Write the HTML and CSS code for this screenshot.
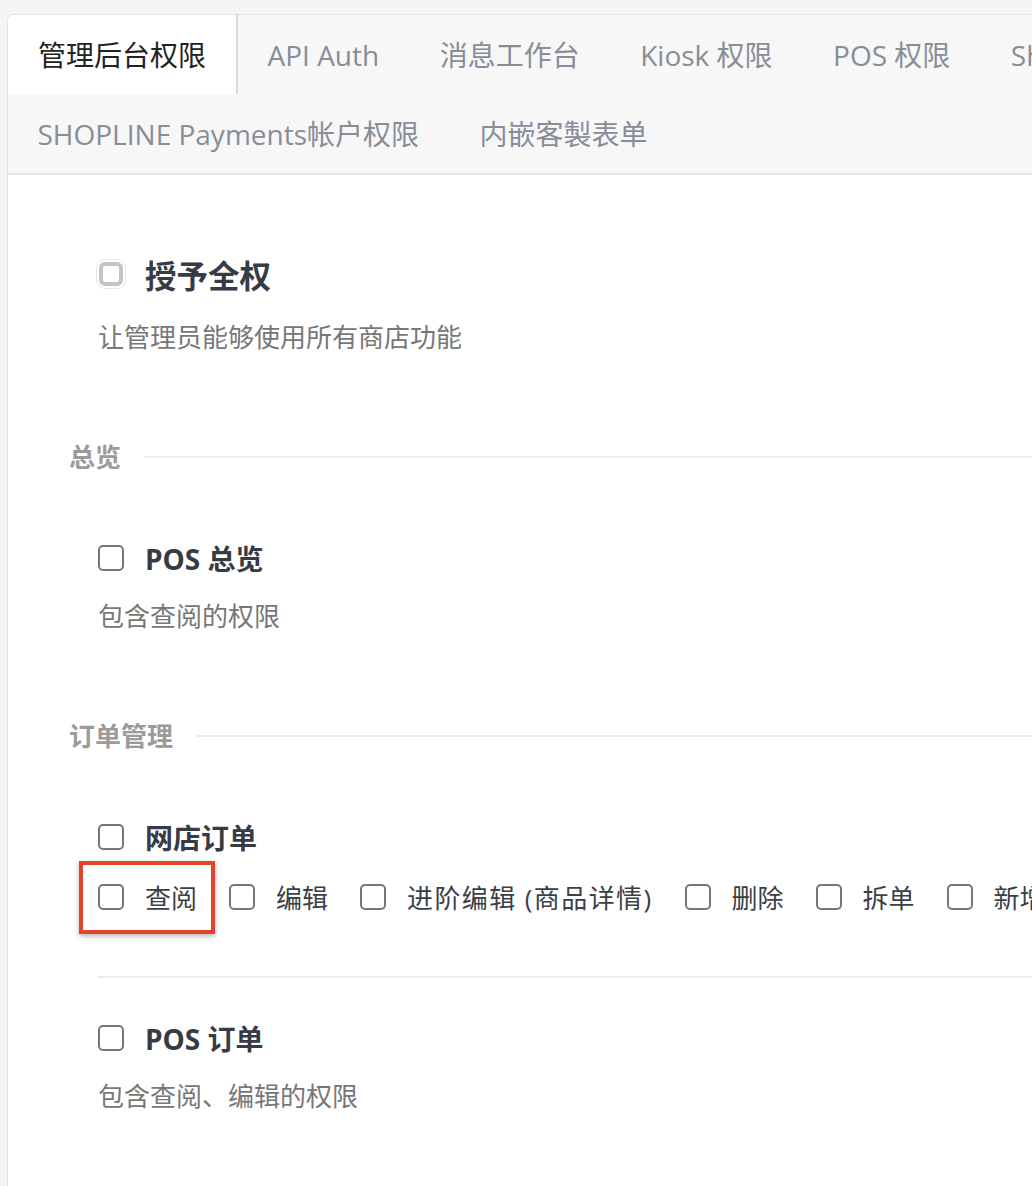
FILE: index.html
```html
<!DOCTYPE html>
<html lang="zh-CN">
<head>
    <meta charset="UTF-8">
    <meta name="viewport" content="width=device-width, initial-scale=1.0">
    <title>权限设定</title>
    <link rel="stylesheet" href="styles.css">
</head>
<body>

<div class="panel">
    <ul class="tabs">
        <li class="tab active">管理后台权限</li>
        <li class="tab">API Auth</li>
        <li class="tab">消息工作台</li>
        <li class="tab">Kiosk 权限</li>
        <li class="tab">POS 权限</li>
        <li class="tab">Shoplytics 权限</li>
        <li class="tab">SHOPLINE Payments帐户权限</li>
        <li class="tab">内嵌客製表单</li>
    </ul>

    <div class="tab-body">
        <div class="perm perm-all">
            <label class="perm-title">
                <span class="box-partial"></span>
                授予全权
            </label>
            <p class="desc">让管理员能够使用所有商店功能</p>
        </div>

        <div class="group">
            <div class="group-head"><span>总览</span></div>
            <div class="perm">
                <label class="perm-title">
                    <input type="checkbox">
                    POS 总览
                </label>
                <p class="desc">包含查阅的权限</p>
            </div>
        </div>

        <div class="group">
            <div class="group-head"><span>订单管理</span></div>
            <div class="perm with-line">
                <label class="perm-title">
                    <input type="checkbox">
                    网店订单
                </label>
                <div class="options">
                    <label class="option">
                        <input type="checkbox">
                        查阅
                        <span class="mark"></span>
                    </label>
                    <label class="option"><input type="checkbox">编辑</label>
                    <label class="option wide"><input type="checkbox">进阶编辑 (商品详情)</label>
                    <label class="option"><input type="checkbox">删除</label>
                    <label class="option"><input type="checkbox">拆单</label>
                    <label class="option"><input type="checkbox">新增订单</label>
                </div>
            </div>
            <div class="perm">
                <label class="perm-title">
                    <input type="checkbox">
                    POS 订单
                </label>
                <p class="desc">包含查阅、编辑的权限</p>
            </div>
        </div>
    </div>
</div>

</body>
</html>
```

FILE: styles.css
```css
html, body {
    overflow: hidden;
}

body {
    margin: 0;
    background-color: #f5f5f5;
    font-family: "Open Sans", "Noto Sans CJK SC", sans-serif;
    color: #333;
}

.panel {
    width: 1400px;
    margin: 14px 0 0 7px;
    border: 1px solid #e4e4e4;
    border-right: none;
    border-radius: 6px 0 0 0;
    background: #fff;
    height: 1300px;
    overflow: hidden;
}

.tabs {
    list-style: none;
    margin: 0;
    padding: 0;
    display: flex;
    flex-wrap: wrap;
    width: 1300px;
    background: #f7f7f7;
    border-bottom: 2px solid #e6e6e6;
}

.tab {
    padding: 1px 29px 0 29.5px;
    line-height: 78px;
    font-size: 28px;
    color: #878d99;
    border-right: 2px solid transparent;
    white-space: nowrap;
}

.tab.active {
    padding: 1px 30px 0;
    background: #fff;
    color: #222;
    border-right-color: #dcdcdc;
    border-top-left-radius: 6px;
}

.tab-body {
    padding: 83px 0 0 61px;
}

.perm {
    padding-left: 29px;
}

.perm-title {
    display: flex;
    align-items: center;
    gap: 21px;
    height: 32px;
    font-size: 28px;
    font-weight: bold;
    color: #363b45;
}

.perm-all .perm-title {
    font-size: 31.5px;
}

input[type="checkbox"] {
    appearance: none;
    -webkit-appearance: none;
    width: 26px;
    height: 26px;
    margin: 0;
    border: 2px solid #777;
    border-radius: 5px;
    background: #fff;
    flex-shrink: 0;
}

.box-partial {
    width: 24px;
    height: 24px;
    margin: 0 1px;
    box-sizing: border-box;
    border: 4px solid #c4c4c4;
    border-radius: 6px;
    box-shadow: 0 0 0 2px #fff, 0 0 0 3px #e8e8e8;
    flex-shrink: 0;
}

.desc {
    margin: 24px 0 0;
    font-size: 26px;
    line-height: 36px;
    color: #777;
}

.perm-all .desc {
    margin-top: 29px;
}

.group {
    margin-top: 84px;
}

.group-head {
    display: flex;
    align-items: center;
    gap: 23px;
    font-size: 26px;
    line-height: 36px;
    font-weight: bold;
    color: #9b9b9b;
    margin-bottom: 67px;
}

.group-head::after {
    content: "";
    flex: 1;
    height: 2px;
    background: #ececec;
}

.with-line .options {
    padding-bottom: 63px;
    border-bottom: 2px solid #ececec;
    margin-bottom: 44px;
}

.options {
    display: flex;
    gap: 32px;
    margin-top: 28px;
    white-space: nowrap;
}

.option {
    position: relative;
    display: flex;
    align-items: center;
    gap: 21px;
    height: 32px;
    font-size: 26px;
    color: #3a3f48;
}

.option.wide {
    letter-spacing: 1.4px;
}

.mark {
    position: absolute;
    left: -19px;
    top: -20px;
    width: 136px;
    height: 73px;
    box-sizing: border-box;
    border: 4px solid #e2432a;
    box-shadow: 0 2px 5px rgba(0, 0, 0, 0.3);
}
```
